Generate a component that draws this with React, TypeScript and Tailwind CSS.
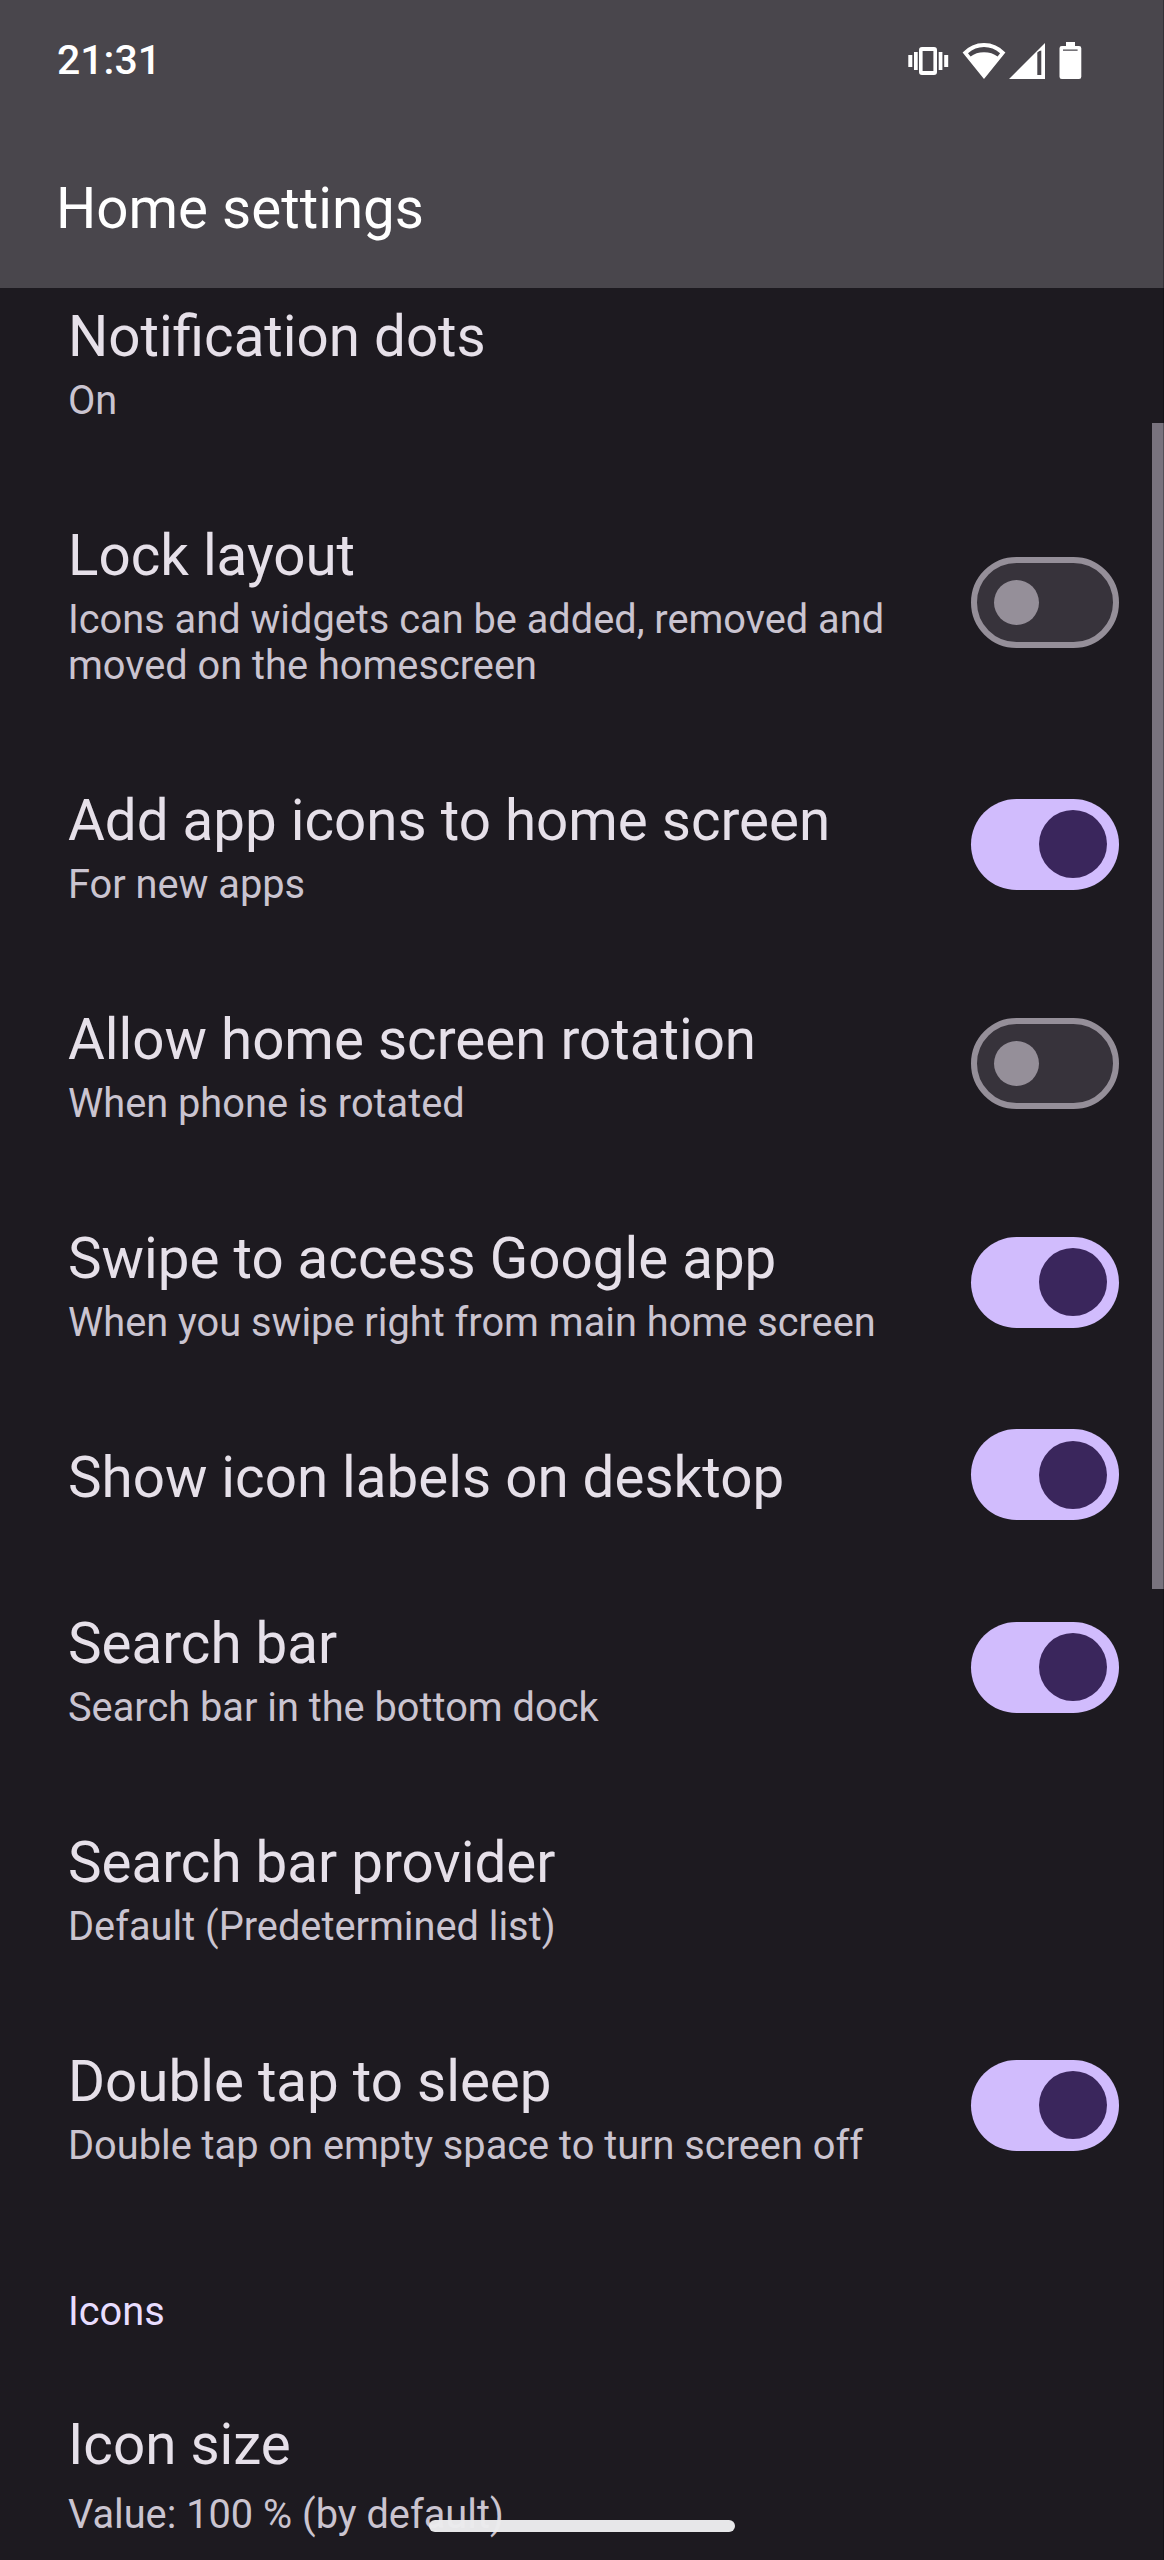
type Item = { title: string; summary?: string; on?: boolean; h: string };

const items: Item[] = [
  { title: "Lock layout", summary: "Icons and widgets can be added, removed and moved on the homescreen", on: false, h: "h-[265px]" },
  { title: "Add app icons to home screen", summary: "For new apps", on: true, h: "h-[219px]" },
  { title: "Allow home screen rotation", summary: "When phone is rotated", on: false, h: "h-[219px]" },
  { title: "Swipe to access Google app", summary: "When you swipe right from main home screen", on: true, h: "h-[219px]" },
  { title: "Show icon labels on desktop", on: true, h: "h-[166px]" },
  { title: "Search bar", summary: "Search bar in the bottom dock", on: true, h: "h-[219px]" },
  { title: "Search bar provider", summary: "Default (Predetermined list)", h: "h-[219px]" },
  { title: "Double tap to sleep", summary: "Double tap on empty space to turn screen off", on: true, h: "h-[219px]" },
];

function Toggle({ on }: { on: boolean }) {
  return on ? (
    <div role="switch" aria-checked="true" className="mb-[7px] flex h-[91px] w-[148px] shrink-0 items-center justify-end rounded-full bg-[#d1bcfd] pr-3">
      <div className="size-[68px] rounded-full bg-[#3a265c]" />
    </div>
  ) : (
    <div role="switch" aria-checked="false" className="mb-[7px] flex h-[91px] w-[148px] shrink-0 items-center rounded-full border-[6px] border-[#958f99] bg-[#37333b] pl-[17px]">
      <div className="size-[45px] rounded-full bg-[#958f99]" />
    </div>
  );
}

function Row({ item }: { item: Item }) {
  return (
    <div className={`flex items-center pr-[45px] pl-[68px] ${item.h}`}>
      <div className="h-full w-[858px] shrink-0 pt-[50px]">
        <div className="text-[56.5px] leading-[66px] whitespace-nowrap text-[#e6e0e9]">{item.title}</div>
        {item.summary && <div className="mt-[8px] text-[39.75px] leading-[46px] text-[#cac4d0]">{item.summary}</div>}
      </div>
      <div className="grow" />
      {item.on !== undefined && <Toggle on={item.on} />}
    </div>
  );
}

function StatusIcons() {
  return (
    <svg className="h-[90px] w-[284px]" viewBox="0 0 284 90" fill="#fff">
      <path fillRule="evenodd" d="M42 27h12q3 0 3 3v22q0 3-3 3H42q-3 0-3-3V30q0-3 3-3Zm.6 4v20h10.8V31Z" />
      <path d="M28.3 35h4v12h-4ZM34 32h3.7v18H34ZM58.700 32h3.700v18h-3.700ZM64.200 35h4v12h-4Z" />
      <path fillRule="evenodd" d="M104 59 82.600 32.500Q91.500 23 104 23t21.400 9.500ZM88 33.200l2.600 3.400Q96 32.200 104 32.200t13.600 4.400l2.500-3.400Q113 27 104 27t-16 6.200Z" />
      <path fillRule="evenodd" d="M129 59 165 23v36Zm28.300-26.500V55h4V30.500q-2 0-4 2Z" />
      <path fillRule="evenodd" d="M186 22h9v4h4q2.300 0 2.300 2.300v28.400q0 2.300-2.300 2.300h-17.200q-2.300 0-2.300-2.300V28.300q0-2.300 2.300-2.300h4.200Zm-3 7.500v1.200h14.600v-1.200Z" />
    </svg>
  );
}

export default function App() {
  return (
    <div className="relative flex h-[2560px] w-[1164px] flex-col overflow-hidden bg-[#1d1a20] font-['Roboto',sans-serif]">
      <header className="h-[288px] shrink-0 bg-[#49464c]">
        <div className="flex h-[160px] items-start justify-between pl-[57px]">
          <div className="mt-[36px] text-[41px] leading-[48px] font-medium text-white">21:31</div>
          <div className="mt-5"><StatusIcons /></div>
        </div>
        <h1 className="mt-4 pl-[56px] text-[56.5px] leading-[66px] text-white">Home settings</h1>
      </header>
      <main className="flex flex-col">
        <div className="h-[185px] pt-4 pl-[68px]">
          <div className="text-[56.5px] leading-[66px] text-[#e6e0e9]">Notification dots</div>
          <div className="mt-[8px] text-[39.75px] leading-[46px] text-[#cac4d0]">On</div>
        </div>
        {items.map((item) => (
          <Row key={item.title} item={item} />
        ))}
        <h2 className="mt-[71px] pl-[68px] text-[39.75px] leading-[46px] font-normal text-[#e8ddff]">Icons</h2>
        <div className="mt-[77px] pl-[68px]">
          <div className="text-[56.5px] leading-[66px] text-[#e6e0e9]">Icon size</div>
          <div className="mt-[14px] text-[39.75px] leading-[46px] text-[#cac4d0]">Value: 100 % (by default)</div>
        </div>
      </main>
      <div className="absolute top-[423px] right-0 h-[1166px] w-3 bg-[#79737e]" />
      <div className="absolute top-[2520px] left-[429px] h-3 w-[306px] rounded-full bg-[#ececee]/98" />
      <div className="absolute top-0 right-0 h-full w-px bg-black/30" />
    </div>
  );
}
